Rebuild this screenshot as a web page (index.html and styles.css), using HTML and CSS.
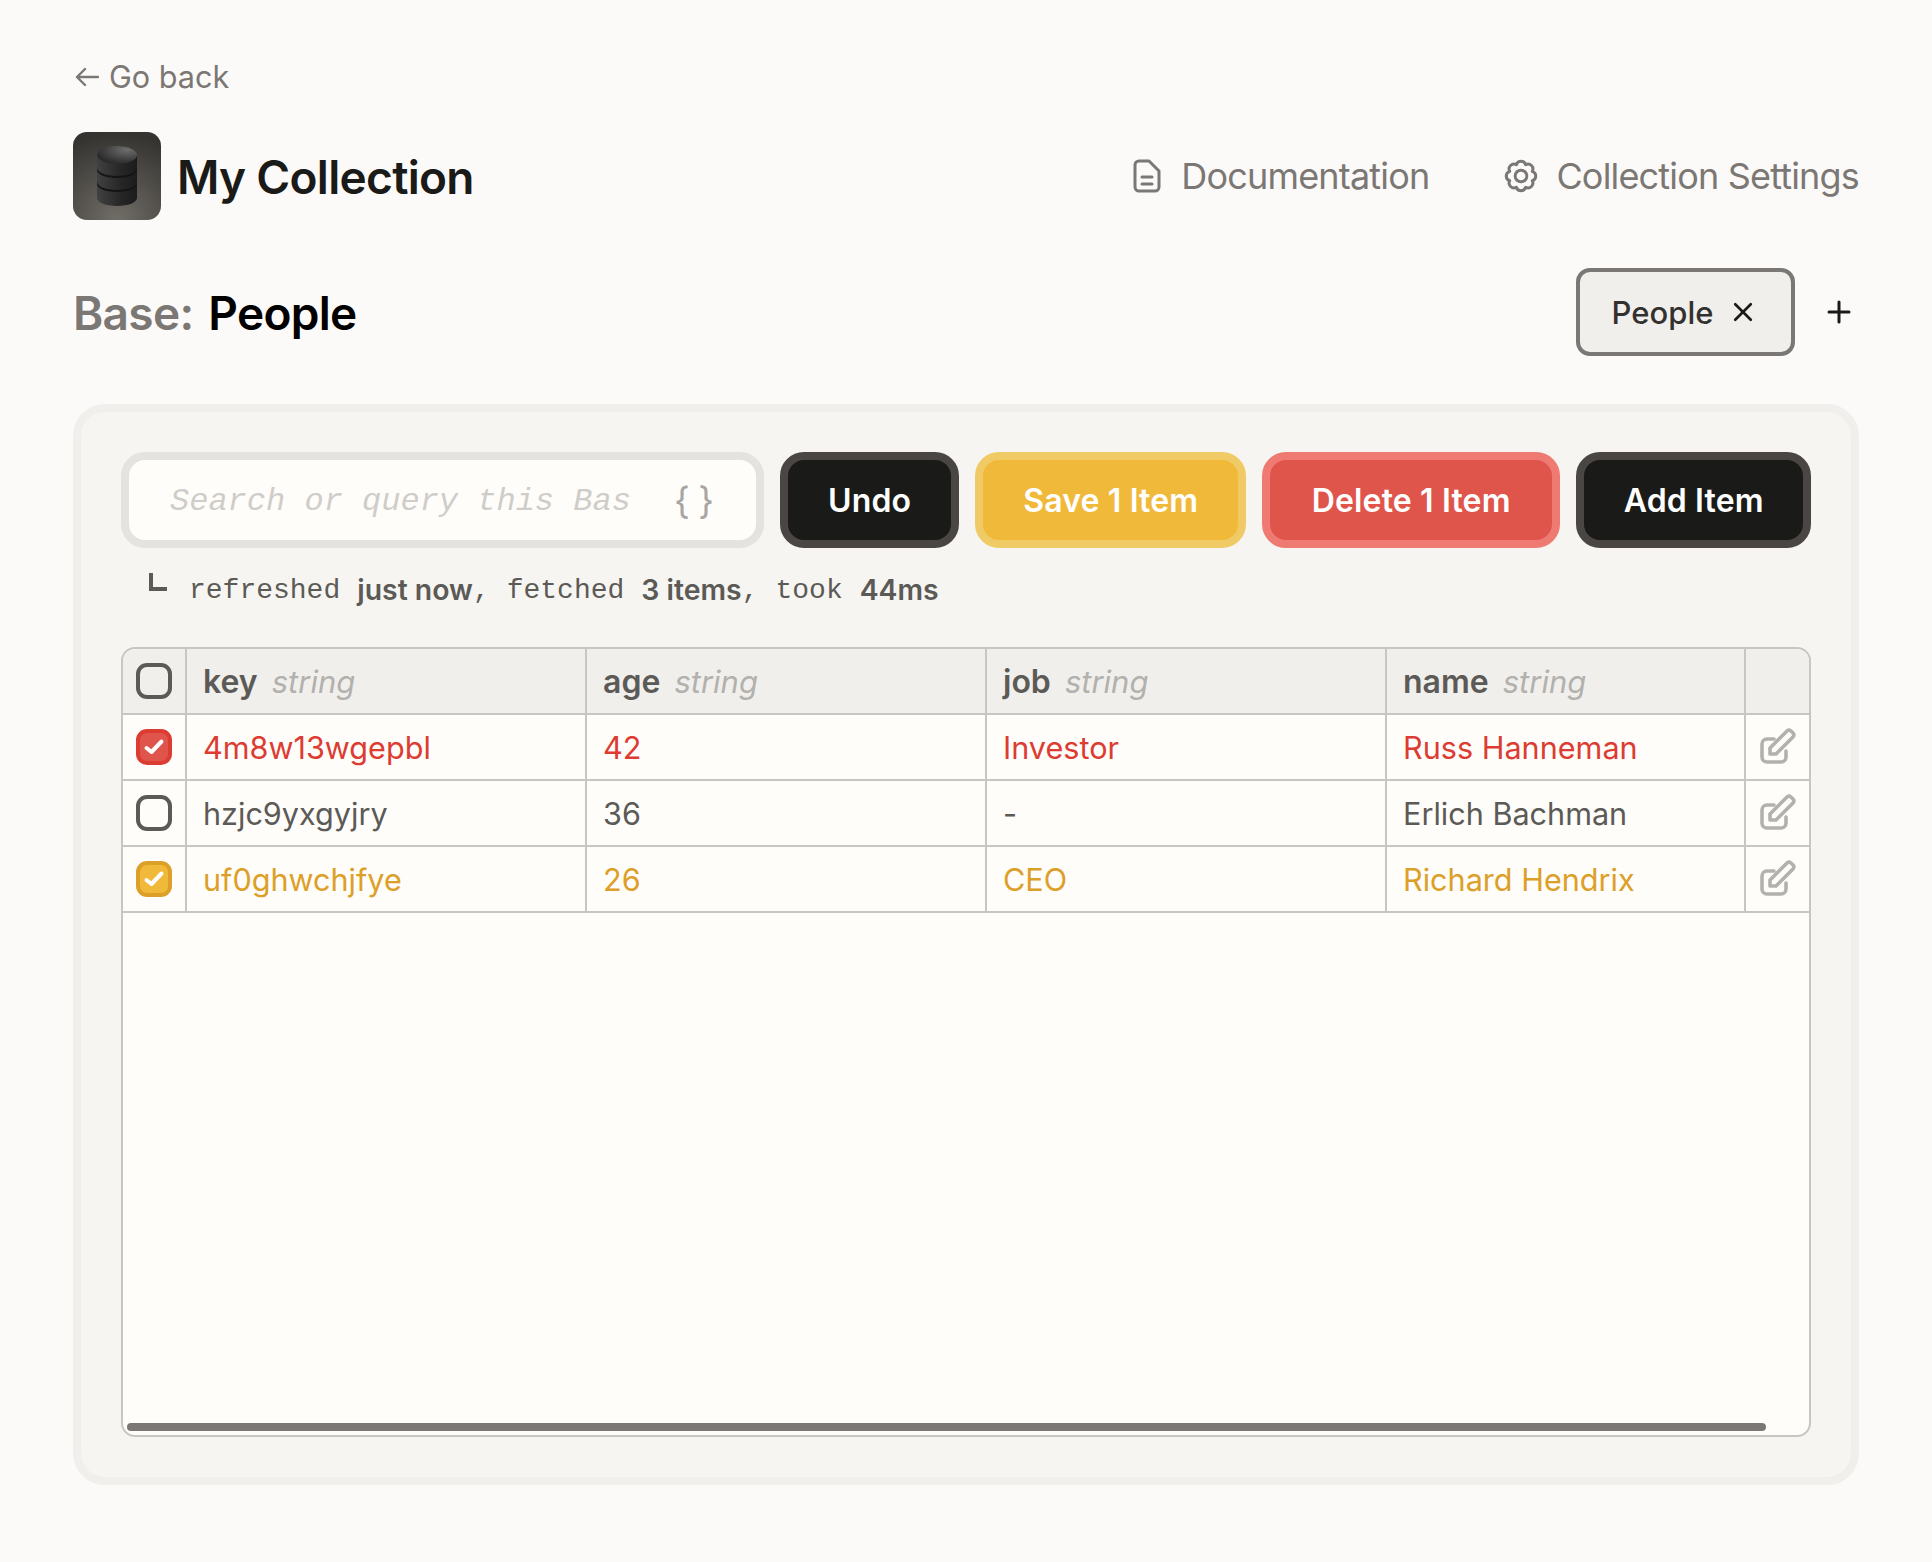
FILE: index.html
```html
<!DOCTYPE html>
<html lang="en">
<head>
    <meta charset="UTF-8">
    <title>My Collection</title>
    <link rel="stylesheet" href="styles.css">
</head>
<body>

    <a class="atras" href="#">
        <svg class="flecha" viewBox="0 0 24 20" fill="none" stroke="currentColor" stroke-width="2.4" stroke-linecap="round" stroke-linejoin="round">
            <path d="M23 10H2M10 2l-8 8 8 8"/>
        </svg>
        Go back
    </a>

    <div class="cabecera">
        <div class="titulo">
            <svg class="logo" viewBox="0 0 88 88">
                <defs>
                    <radialGradient id="fondo" cx="0.5" cy="1" r="1">
                        <stop offset="0" stop-color="#716e68"/>
                        <stop offset="1" stop-color="#353330"/>
                    </radialGradient>
                    <linearGradient id="cuerpo" x1="0" x2="1" y1="0" y2="0">
                        <stop offset="0" stop-color="#414141"/>
                        <stop offset="0.6" stop-color="#262626"/>
                        <stop offset="1" stop-color="#1c1c1c"/>
                    </linearGradient>
                    <radialGradient id="tapa" cx="0.75" cy="0.2" r="0.8">
                        <stop offset="0" stop-color="#6e6e6e"/>
                        <stop offset="1" stop-color="#2b2b2b"/>
                    </radialGradient>
                </defs>
                <rect width="88" height="88" rx="14" fill="url(#fondo)"/>
                <path d="M24 50v16c0 4.4 9 8 20 8s20-3.600 20-8V50z" fill="url(#cuerpo)"/>
                <path d="M24 36v14c0 4.400 9 8 20 8s20-3.600 20-8V36z" transform="translate(0 2)" fill="#141414"/>
                <path d="M24 36v14c0 4.400 9 8 20 8s20-3.600 20-8V36z" fill="url(#cuerpo)"/>
                <path d="M24 23v13c0 4.400 9 8 20 8s20-3.600 20-8V23z" transform="translate(0 2)" fill="#141414"/>
                <path d="M24 23v13c0 4.400 9 8 20 8s20-3.600 20-8V23z" fill="url(#cuerpo)"/>
                <ellipse cx="44" cy="23" rx="20" ry="9" fill="url(#tapa)"/>
            </svg>
            <h1>My Collection</h1>
        </div>
        <nav class="enlaces">
            <a href="#">
                <svg class="ico-doc" viewBox="0 0 28 34" fill="none" stroke="currentColor" stroke-width="3" stroke-linecap="round" stroke-linejoin="round">
                    <path d="M6 2h10l10 10v16a4 4 0 0 1-4 4H6a4 4 0 0 1-4-4V6a4 4 0 0 1 4-4z"/>
                    <path d="M9 18h10M9 25h10"/>
                </svg>
                Documentation
            </a>
            <a href="#">
                <svg class="ico-gear" viewBox="0 0 32 32" fill="none" stroke="currentColor" stroke-width="2.8" stroke-linejoin="round">
                    <path d="M11.6 5.37A4.600 4.600 0 0 1 20.4 5.37A4.600 4.600 0 0 1 26.63 11.6A4.600 4.600 0 0 1 26.63 20.4A4.600 4.600 0 0 1 20.4 26.63A4.600 4.600 0 0 1 11.6 26.63A4.600 4.600 0 0 1 5.37 20.4A4.600 4.600 0 0 1 5.37 11.6A4.600 4.600 0 0 1 11.6 5.37z"/>
                    <circle cx="16" cy="16" r="5.500"/>
                </svg>
                Collection Settings
            </a>
        </nav>
    </div>

    <div class="base-fila">
        <h2><span class="base-etiqueta">Base:</span> People</h2>
        <div class="pestanas">
            <div class="pestana">
                People
                <svg class="ico-x" viewBox="0 0 18 18" fill="none" stroke="currentColor" stroke-width="2.4" stroke-linecap="round">
                    <path d="M2 2l14 14M16 2L2 16"/>
                </svg>
            </div>
            <svg class="ico-mas" viewBox="0 0 24 24" fill="none" stroke="currentColor" stroke-width="3" stroke-linecap="round">
                <path d="M12 2v20M2 12h20"/>
            </svg>
        </div>
    </div>

    <div class="panel">
        <div class="barra">
            <div class="buscador">
                <input type="text" placeholder="Search or query this Base">
                <span class="llaves">{ }</span>
            </div>
            <button class="btn btn-negro btn-undo">Undo</button>
            <button class="btn btn-ambar">Save 1 Item</button>
            <button class="btn btn-rojo">Delete 1 Item</button>
            <button class="btn btn-negro btn-add">Add Item</button>
        </div>

        <div class="estado">
            <span class="esquina"></span>
            <span>refreshed</span> <b>just now</b><span>,</span>
            <span class="sep">fetched</span> <b>3 items</b><span>,</span>
            <span class="sep">took</span> <b>44ms</b>
        </div>

        <div class="tabla-marco">
            <table>
                <colgroup>
                    <col class="col-check">
                    <col class="col-ancha">
                    <col class="col-ancha">
                    <col class="col-ancha">
                    <col class="col-nombre">
                    <col class="col-editar">
                </colgroup>
                <thead>
                    <tr>
                        <th><span class="caja"></span></th>
                        <th>key <i>string</i></th>
                        <th>age <i>string</i></th>
                        <th>job <i>string</i></th>
                        <th>name <i>string</i></th>
                        <th></th>
                    </tr>
                </thead>
                <tbody>
                    <tr class="fila-roja">
                        <td><span class="caja caja-roja"><svg viewBox="0 0 28 28" fill="none" stroke="#fff" stroke-width="4" stroke-linecap="round" stroke-linejoin="round"><path d="M6.500 15l5 4 10-10.500"/></svg></span></td>
                        <td>4m8w13wgepbl</td>
                        <td>42</td>
                        <td>Investor</td>
                        <td>Russ Hanneman</td>
                        <td><svg class="ico-editar" viewBox="0 0 36 36" fill="none" stroke="currentColor" stroke-width="3.6" stroke-linecap="round" stroke-linejoin="round"><path d="M14 11H7a5 5 0 0 0-5 5v13a5 5 0 0 0 5 5h14a5 5 0 0 0 5-5v-6"/><path d="M10 26v-6L27 3a3 3 0 0 1 4 0l2 2a3 3 0 0 1 0 4L16 26z"/></svg></td>
                    </tr>
                    <tr>
                        <td><span class="caja"></span></td>
                        <td>hzjc9yxgyjry</td>
                        <td>36</td>
                        <td>-</td>
                        <td>Erlich Bachman</td>
                        <td><svg class="ico-editar" viewBox="0 0 36 36" fill="none" stroke="currentColor" stroke-width="3.6" stroke-linecap="round" stroke-linejoin="round"><path d="M14 11H7a5 5 0 0 0-5 5v13a5 5 0 0 0 5 5h14a5 5 0 0 0 5-5v-6"/><path d="M10 26v-6L27 3a3 3 0 0 1 4 0l2 2a3 3 0 0 1 0 4L16 26z"/></svg></td>
                    </tr>
                    <tr class="fila-ambar">
                        <td><span class="caja caja-ambar"><svg viewBox="0 0 28 28" fill="none" stroke="#fff" stroke-width="4" stroke-linecap="round" stroke-linejoin="round"><path d="M6.500 15l5 4 10-10.500"/></svg></span></td>
                        <td>uf0ghwchjfye</td>
                        <td>26</td>
                        <td>CEO</td>
                        <td>Richard Hendrix</td>
                        <td><svg class="ico-editar" viewBox="0 0 36 36" fill="none" stroke="currentColor" stroke-width="3.6" stroke-linecap="round" stroke-linejoin="round"><path d="M14 11H7a5 5 0 0 0-5 5v13a5 5 0 0 0 5 5h14a5 5 0 0 0 5-5v-6"/><path d="M10 26v-6L27 3a3 3 0 0 1 4 0l2 2a3 3 0 0 1 0 4L16 26z"/></svg></td>
                    </tr>
                </tbody>
            </table>
            <div class="scroll"></div>
        </div>
    </div>

</body>
</html>
```

FILE: styles.css
```css
* {
    box-sizing: border-box;
}

body {
    font-family: Inter, "Liberation Sans", sans-serif;
    background-color: #fbfaf8;
    color: #1a1a18;
    margin: 0;
    padding: 56px 73px 0;
}

a {
    color: inherit;
    text-decoration: none;
}

.atras {
    display: flex;
    align-items: center;
    gap: 10px;
    height: 40px;
    padding-top: 1px;
    padding-left: 2px;
    font-size: 30.6px;
    color: #7b7774;
}

.flecha {
    width: 24px;
    height: 20px;
}

.cabecera {
    display: flex;
    justify-content: space-between;
    align-items: center;
    margin-top: 36px;
    height: 88px;
}

.titulo {
    display: flex;
    align-items: center;
    gap: 16px;
}

.logo {
    width: 88px;
    height: 88px;
}

h1 {
    margin: 0;
    padding-top: 2px;
    font-size: 46px;
    font-weight: 600;
    letter-spacing: -0.7px;
}

.enlaces {
    display: flex;
    gap: 75px;
    font-size: 36px;
    letter-spacing: -0.82px;
    color: #7b7774;
}

.enlaces a {
    display: flex;
    align-items: center;
    gap: 20px;
}

.enlaces a:last-child {
    gap: 18px;
}

.ico-doc {
    width: 28px;
    height: 34px;
}

.ico-gear {
    width: 34px;
    height: 34px;
}

.base-fila {
    display: flex;
    justify-content: space-between;
    align-items: center;
    margin-top: 48px;
    height: 88px;
}

h2 {
    margin: 0;
    padding-top: 2px;
    font-size: 46px;
    font-weight: 600;
    letter-spacing: -0.7px;
    color: #000;
}

.base-etiqueta {
    color: #7b7774;
    margin-right: 4px;
}

.pestanas {
    display: flex;
    align-items: center;
    gap: 32px;
    padding-right: 8px;
}

.pestana {
    display: flex;
    align-items: center;
    justify-content: center;
    gap: 20px;
    width: 219px;
    height: 88px;
    padding-right: 6px;
    background-color: #f0efec;
    border: 4px solid #7b7774;
    border-radius: 14px;
    font-size: 31px;
    font-weight: 500;
    color: #33312f;
}

.ico-x {
    width: 20px;
    height: 20px;
    color: #1a1a18;
}

.ico-mas {
    width: 24px;
    height: 24px;
}

.panel {
    margin-top: 48px;
    height: 1081px;
    background-color: #f6f5f2;
    border: 8px solid #f0efec;
    border-radius: 32px;
    padding: 40px;
}

.barra {
    display: flex;
    gap: 16px;
    height: 96px;
}

.buscador {
    display: flex;
    align-items: center;
    width: 644px;
    padding-left: 41px;
    background-color: #fffdfa;
    border: 8px solid #e4e3e0;
    border-radius: 24px;
}

.buscador input {
    width: 460px;
    padding: 2px 0 0;
    border: none;
    outline: none;
    background: none;
    font-family: "Liberation Mono", monospace;
    font-style: italic;
    font-size: 32px;
}

.buscador input::placeholder {
    color: #cfcdc9;
    opacity: 1;
}

.llaves {
    margin-left: 44px;
    font-size: 37px;
    color: #a8a5a2;
    word-spacing: -2px;
}

.btn {
    border-width: 8px;
    border-style: solid;
    border-radius: 24px;
    font-family: inherit;
    font-size: 32px;
    font-weight: 600;
    letter-spacing: 0.15px;
    color: #fff;
    cursor: pointer;
}

.btn-negro {
    background-color: #1a1a18;
    border-color: #4a4643;
}

.btn-ambar {
    width: 271px;
    background-color: #f0b93a;
    border-color: #f0ca65;
}

.btn-rojo {
    width: 299px;
    background-color: #e0554b;
    border-color: #ee7a72;
}

.btn-undo {
    width: 180px;
}

.btn-add {
    width: 235px;
}

.estado {
    display: flex;
    align-items: center;
    height: 82px;
    margin-bottom: 17px;
    padding-left: 27px;
    font-family: "Liberation Mono", monospace;
    font-size: 28px;
    color: #5c5a56;
    white-space: pre;
}

.estado b {
    margin-left: 17px;
    font-family: Inter, sans-serif;
    font-size: 28.4px;
    font-weight: 600;
}

.estado span {
    padding-top: 2px;
}

.sep {
    margin-left: 17px;
}

.estado .esquina {
    width: 18px;
    height: 18px;
    padding: 0;
    margin: -14px 22px 0 1px;
    border-left: 4px solid #5c5a56;
    border-bottom: 4px solid #5c5a56;
}

.tabla-marco {
    position: relative;
    height: 790px;
    background-color: #fffdfa;
    border: 2px solid #c9c5c2;
    border-radius: 14px;
    overflow: hidden;
}

table {
    width: 1686px;
    table-layout: fixed;
    border-collapse: separate;
    border-spacing: 0;
    font-size: 30.6px;
    color: #5c5a56;
}

.col-check {
    width: 64px;
}

.col-ancha {
    width: 400px;
}

.col-nombre {
    width: 359px;
}

.col-editar {
    width: 63px;
}

th, td {
    height: 66px;
    padding: 0 0 0 16px;
    text-align: left;
    border-bottom: 2px solid #c9c5c2;
    border-right: 2px solid #c9c5c2;
    font-weight: 400;
}

th:first-child, td:first-child {
    padding-left: 13px;
}

th:last-child, td:last-child {
    border-right: none;
    padding-left: 14px;
}

th {
    background-color: #f0efec;
    font-size: 32px;
    font-weight: 600;
}

th i {
    margin-left: 6px;
    font-size: 31px;
    font-weight: 400;
    color: #b3b1ad;
}

.fila-roja td {
    color: #dc3c32;
}

.fila-ambar td {
    color: #dca028;
}

.caja {
    display: block;
    width: 36px;
    height: 36px;
    border: 4px solid #5c5a56;
    border-radius: 11px;
}

.caja svg {
    display: block;
    width: 28px;
    height: 28px;
}

.caja-roja {
    background-color: #e0554b;
    border-color: #dc3c32;
}

.caja-ambar {
    background-color: #f0b93a;
    border-color: #dca028;
}

.ico-editar {
    display: block;
    width: 36px;
    height: 36px;
    margin-top: -2px;
    color: #b3b1ad;
}

.scroll {
    position: absolute;
    left: 4px;
    bottom: 4px;
    width: 1639px;
    height: 8px;
    background-color: #7b7774;
    border-radius: 4px;
}
```
